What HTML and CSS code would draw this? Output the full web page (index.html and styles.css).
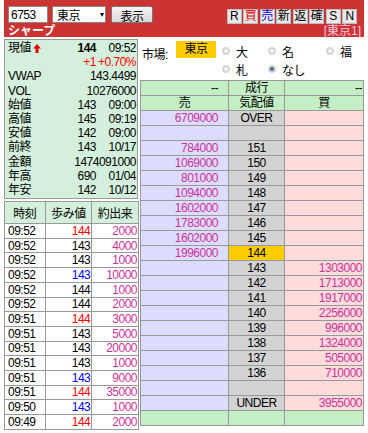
FILE: index.html
```html
<!DOCTYPE html>
<html lang="ja">
<head>
    <meta charset="UTF-8">
    <title>板情報</title>
    <link rel="stylesheet" href="styles.css">
</head>
<body>

    <!-- Cabecera roja -->
    <div class="header">
        <div class="bar">
            <input class="code" type="text" value="6753">
            <div class="select">東京<span class="arrow">▾</span></div>
            <button class="show">表示</button>
            <div class="keys">
                <span class="key">R</span>
                <span class="key buy">買</span>
                <span class="key sell">売</span>
                <span class="key">新</span>
                <span class="key">返</span>
                <span class="key">確</span>
                <span class="key">S</span>
                <span class="key">N</span>
            </div>
        </div>
        <div class="title-row">
            <span class="name">シャープ</span>
            <span class="exch">[東京1]</span>
        </div>
    </div>

    <div class="main">
        <!-- Columna izquierda -->
        <div class="left">
            <div class="info">
                <div class="row">
                    <span class="label">現値<svg class="up" width="8" height="9" viewBox="0 0 8 9"><polygon points="4,0 8,4.5 5.5,4.5 5.5,9 2.5,9 2.5,4.5 0,4.5" fill="#e00000"/></svg></span>
                    <span class="val bold">144</span><span class="time">09:52</span>
                </div>
                <div class="row"><span class="label"></span><span class="val red">+1</span><span class="time red">+0.70%</span></div>
                <div class="row"><span class="label">VWAP</span><span class="wide">143.4499</span></div>
                <div class="row"><span class="label">VOL</span><span class="wide">10276000</span></div>
                <div class="row"><span class="label">始値</span><span class="val">143</span><span class="time">09:00</span></div>
                <div class="row"><span class="label">高値</span><span class="val">145</span><span class="time">09:19</span></div>
                <div class="row"><span class="label">安値</span><span class="val">142</span><span class="time">09:00</span></div>
                <div class="row"><span class="label">前終</span><span class="val">143</span><span class="time">10/17</span></div>
                <div class="row"><span class="label">金額</span><span class="wide">1474091000</span></div>
                <div class="row"><span class="label">年高</span><span class="val">690</span><span class="time">01/04</span></div>
                <div class="row"><span class="label">年安</span><span class="val">142</span><span class="time">10/12</span></div>
            </div>

            <table class="trades">
                <thead>
                    <tr><th>時刻</th><th>歩み値</th><th>約出来</th></tr>
                </thead>
                <tbody id="trades"></tbody>
            </table>
        </div>

        <!-- Columna derecha -->
        <div class="right">
            <div class="market">
                <span class="market-label">市場:</span>
                <span class="market-now">東京</span>
                <div class="radios">
                    <span class="radio"><i></i>大</span>
                    <span class="radio"><i></i>名</span>
                    <span class="radio"><i></i>福</span>
                    <span class="radio"><i></i>札</span>
                    <span class="radio"><i class="on"></i>なし</span>
                </div>
            </div>

            <table class="board">
                <thead>
                    <tr class="green"><td class="num">--</td><td class="center">成行</td><td class="num">--</td></tr>
                    <tr class="green"><td class="center">売</td><td class="center">気配値</td><td class="center">買</td></tr>
                </thead>
                <tbody id="board"></tbody>
                <tfoot>
                    <tr class="green"><td></td><td></td><td></td></tr>
                </tfoot>
            </table>
        </div>
    </div>

    <script>
        // Datos de los últimos trades
        const trades = [
            ["09:52", "144", "red", "2000"],
            ["09:52", "143", "", "4000"],
            ["09:52", "143", "", "1000"],
            ["09:52", "143", "blue", "10000"],
            ["09:52", "144", "", "1000"],
            ["09:52", "144", "", "2000"],
            ["09:51", "144", "red", "3000"],
            ["09:51", "143", "", "5000"],
            ["09:51", "143", "", "20000"],
            ["09:51", "143", "", "1000"],
            ["09:51", "143", "blue", "9000"],
            ["09:51", "144", "red", "35000"],
            ["09:50", "143", "blue", "1000"],
            ["09:49", "144", "red", "2000"]
        ];

        document.getElementById("trades").innerHTML = trades.map(t =>
            `<tr><td>${t[0]}</td><td class="num ${t[2]}">${t[1]}</td><td class="num pink">${t[3]}</td></tr>`
        ).join("");

        // Libro de órdenes
        const board = [
            ["6709000", "OVER", ""],
            ["", "", ""],
            ["784000", "151", ""],
            ["1069000", "150", ""],
            ["801000", "149", ""],
            ["1094000", "148", ""],
            ["1602000", "147", ""],
            ["1783000", "146", ""],
            ["1602000", "145", ""],
            ["1996000", "144", ""],
            ["", "143", "1303000"],
            ["", "142", "1713000"],
            ["", "141", "1917000"],
            ["", "140", "2256000"],
            ["", "139", "996000"],
            ["", "138", "1324000"],
            ["", "137", "505000"],
            ["", "136", "710000"],
            ["", "", ""],
            ["", "UNDER", "3955000"]
        ];

        document.getElementById("board").innerHTML = board.map(b =>
            `<tr><td class="ask">${b[0]}</td><td class="price ${b[1] === "144" ? "current" : ""}">${b[1]}</td><td class="bid">${b[2]}</td></tr>`
        ).join("");
    </script>

</body>
</html>
```

FILE: styles.css
```css
/* Estilos generales */
body {
    margin: 0;
    padding: 0 4px;
    font-family: "Liberation Sans", "Noto Sans CJK JP", sans-serif;
    font-size: 12px;
    letter-spacing: -0.5px;
    color: #000;
    background: #fff;
}

/* Cabecera roja */
.header {
    background-color: #cc3333;
    padding: 6px 0 1px 4px;
    height: 30px;
}

.bar {
    display: flex;
    align-items: center;
    height: 17px;
}

.code {
    width: 34px;
    height: 15px;
    border: 1px solid #888;
    padding: 0 2px;
    margin: 0;
    font-family: inherit;
    font-size: 12px;
    letter-spacing: -0.5px;
}

.select {
    display: flex;
    justify-content: space-between;
    align-items: center;
    width: 46px;
    height: 15px;
    margin-left: 4px;
    padding: 0 2px 0 4px;
    background: #fff;
    border: 1px solid #888;
    font-size: 12px;
}

.select .arrow {
    font-size: 8px;
}

.show {
    width: 42px;
    height: 17px;
    margin-left: 5px;
    padding: 0;
    border: 1px solid #777;
    border-radius: 2px;
    background: linear-gradient(#f4f4f4, #d8d8d8);
    font-family: inherit;
    font-size: 12px;
    letter-spacing: -0.5px;
}

.keys {
    display: flex;
    gap: 1.5px;
    margin-left: auto;
    margin-right: 7px;
    margin-top: 3px;
}

.key {
    width: 13px;
    height: 13px;
    line-height: 13px;
    text-align: center;
    background: #e8e8e8;
    border: 1px solid #bbb;
    font-size: 12px;
}

.key.buy {
    color: #e00000;
}

.key.sell {
    color: #0000dd;
}

.title-row {
    display: flex;
    justify-content: space-between;
    margin-top: 2px;
    height: 13px;
    line-height: 13px;
}

.name {
    color: #fff;
    font-weight: bold;
    font-size: 12px;
    letter-spacing: 0;
}

.exch {
    color: #f4c8e4;
    font-size: 12px;
    letter-spacing: 0;
    padding-right: 3px;
}

/* Contenido principal */
.main {
    display: flex;
    gap: 2px;
    margin-top: 2px;
}

.left {
    width: 134px;
}

.right {
    flex: 1;
}

/* Caja de información */
.info {
    background-color: #d4f0dc;
    border: 1px solid #999;
    padding: 1px 1px 1px 3px;
    width: 128px;
}

.info .row {
    display: grid;
    grid-template-columns: 1fr 38px 40px;
    height: 14.2px;
    line-height: 14px;
}

.info .val,
.info .time,
.info .wide {
    text-align: right;
}

.info .wide {
    grid-column: 2 / 4;
}

.up {
    margin-left: 2px;
    vertical-align: -1px;
}

.bold {
    font-weight: bold;
}

.red {
    color: #ff0000;
}

.blue {
    color: #0000ff;
}

.pink {
    color: #cc3399;
}

/* Tabla de trades */
.trades {
    border-collapse: collapse;
    width: 135px;
    margin-top: 2px;
}

.trades th {
    background-color: #d4f0dc;
    border: 1px solid #999;
    height: 19px;
    font-weight: normal;
    font-size: 12px;
}

.trades td {
    border: 1px solid #999;
    height: 13.7px;
    line-height: 12px;
    padding: 0 1px 0 3px;
}

.trades td.num {
    text-align: right;
}

/* Selector de mercado */
.market {
    display: flex;
    align-items: flex-start;
    height: 41px;
}

.market-label {
    margin-top: 6px;
    margin-left: 2px;
    width: 34px;
}

.market-now {
    background-color: #ffcc00;
    width: 40px;
    height: 17px;
    line-height: 17px;
    margin-top: 2px;
    text-align: center;
}

.radios {
    display: grid;
    grid-template-columns: 46px 58px auto;
    row-gap: 4px;
    margin-left: 6px;
    margin-top: 5px;
}

.radio {
    display: flex;
    align-items: center;
    gap: 6px;
    height: 14px;
}

.radio i {
    width: 6px;
    height: 6px;
    border-radius: 50%;
    border: 1px solid #ccc;
    background: radial-gradient(#fff, #c8c8c8);
}

.radio i.on {
    background: radial-gradient(#3a6a9a 35%, #c8c8c8 45%);
}

/* Tabla de cotizaciones */
.board {
    border-collapse: collapse;
    width: 224px;
    table-layout: fixed;
}

.board td {
    border: 1px solid #999;
    height: 14px;
    padding: 0;
    line-height: 12px;
    white-space: nowrap;
}

.board td:nth-child(1) {
    width: 77px;
}

.board td:nth-child(3) {
    width: 77px;
}

.board .green td {
    background-color: #c4eec4;
}

.board .center {
    text-align: center;
}

.board .num {
    text-align: right;
    padding-right: 10px;
}

.board .num:last-child {
    padding-right: 1px;
}

.board .ask {
    background-color: #dcdcff;
    color: #cc3399;
    text-align: right;
    padding-right: 10px;
}

.board .price {
    background-color: #d3d3d3;
    text-align: center;
}

.board .price.current {
    background-color: #ffcc00;
}

.board .bid {
    background-color: #ffdcdc;
    color: #cc3399;
    text-align: right;
    padding-right: 1px;
}
```
